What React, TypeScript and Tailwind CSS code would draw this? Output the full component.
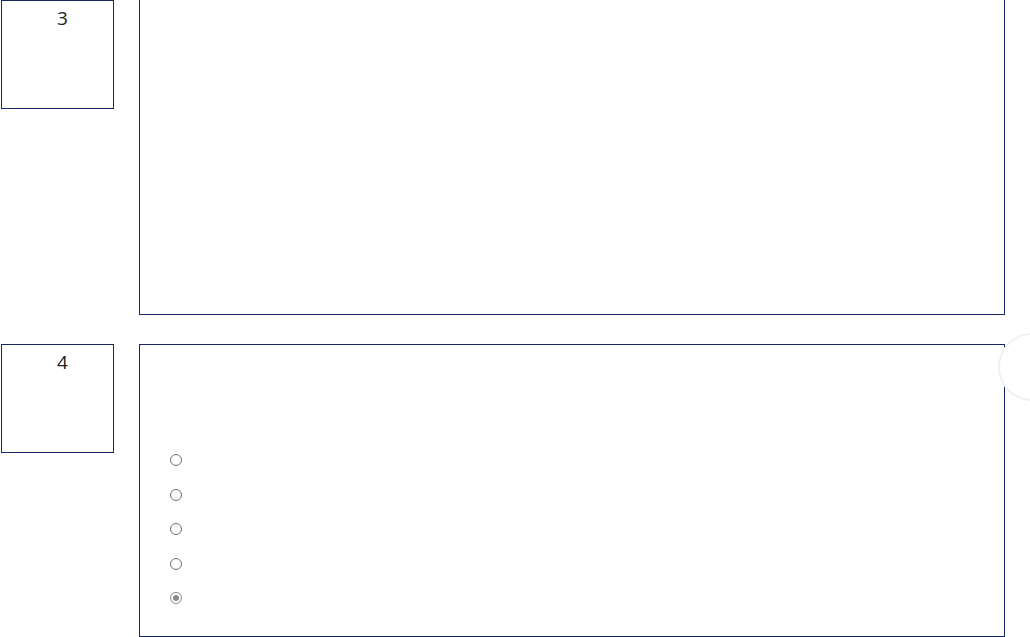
import React from "react";

const options = [false, false, false, false, true];

function NumberBox({ n }: { n: number }) {
  return (
    <div className="ml-px w-[113px] h-[109px] shrink-0 border border-[#16266a] bg-white">
      <div className="pl-[10px] pt-[5px] text-center text-[19px] leading-6 text-[#222]">{n}</div>
    </div>
  );
}

function Radio({ checked }: { checked: boolean }) {
  return (
    <span
      className={
        checked
          ? "flex items-center justify-center w-[12px] h-[12px] rounded-full border border-[#8a8a8a] bg-white"
          : "block w-[12px] h-[12px] rounded-full border border-[#707070] bg-white"
      }
    >
      {checked && <span className="block w-[6px] h-[6px] rounded-full bg-[#8a8a8a]" />}
    </span>
  );
}

export default function App() {
  return (
    <div
      className="relative min-h-screen bg-white overflow-hidden"
      style={{ fontFamily: '"Open Sans", "Noto Sans", sans-serif' }}
    >
      <div className="flex items-start gap-[25px]">
        <NumberBox n={3} />
        <div className="w-[866px] h-[315px] border border-t-0 border-[#16266a]" />
      </div>

      <div className="mt-[29px] flex items-start gap-[25px]">
        <NumberBox n={4} />
        <div className="w-[866px] h-[293px] border border-[#16266a] pt-[98px] pl-[30px]">
          <div className="flex flex-col">
            {options.map((c, i) => (
              <label key={i} className="flex items-center h-[34.5px]">
                <Radio checked={c} />
              </label>
            ))}
          </div>
        </div>
      </div>

      <div className="absolute left-[998px] top-[333px] w-[68px] h-[68px] rounded-full border-2 border-[#f0f0f0] bg-white" />
    </div>
  );
}
